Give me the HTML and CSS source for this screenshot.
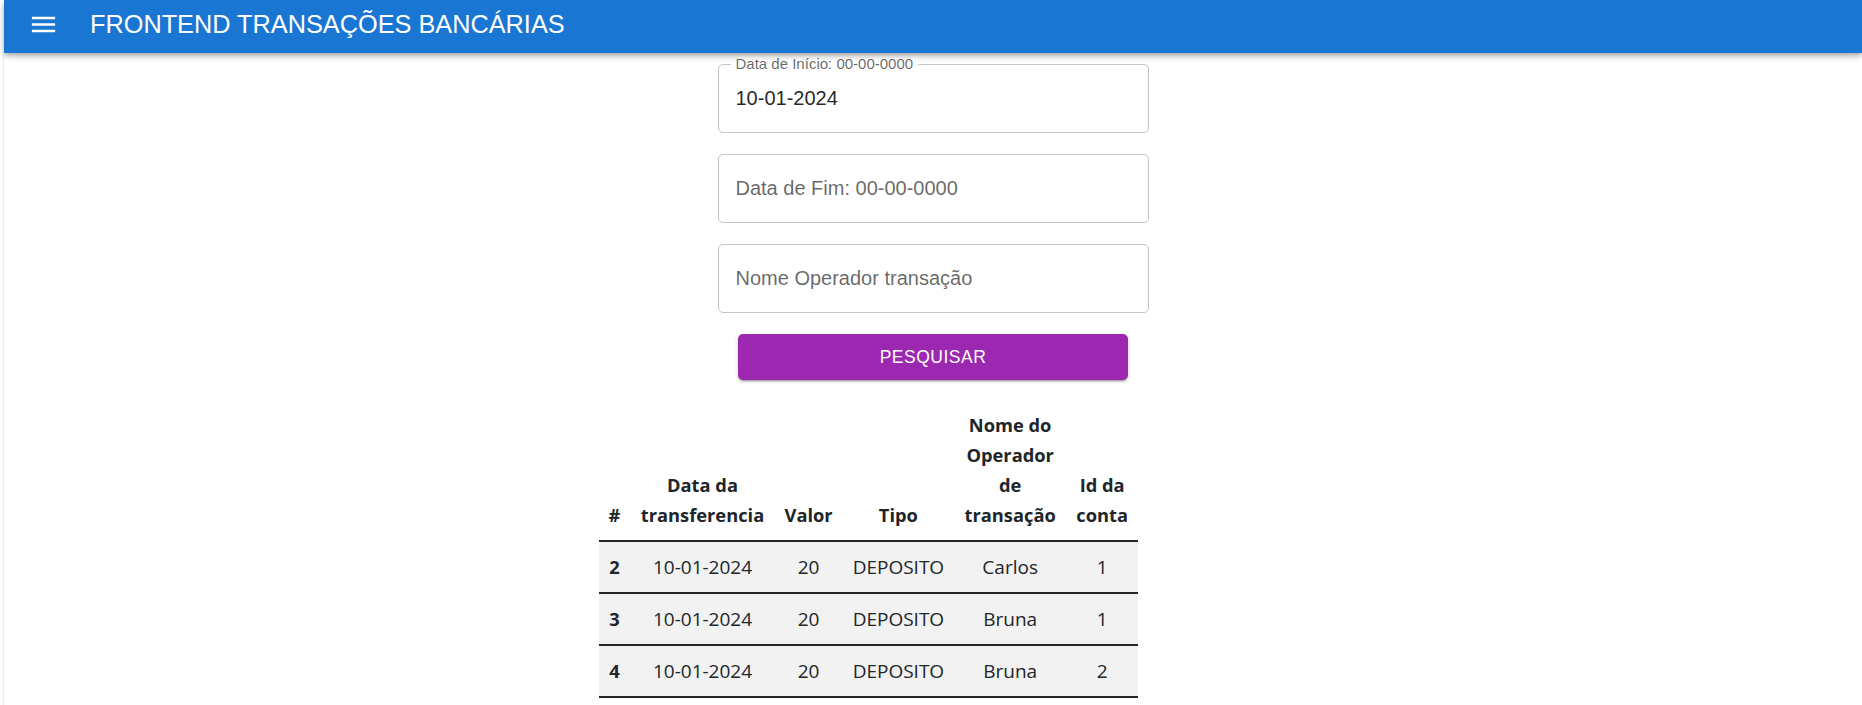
FILE: index.html
```html
<!DOCTYPE html>
<html lang="pt-BR">
<head>
<meta charset="utf-8">
<title>Frontend Transações Bancárias</title>
<link rel="stylesheet" href="styles.css">
</head>
<body>
<div class="app">
  <header class="appbar">
    <button class="menu-btn" aria-label="menu">
      <svg class="menu-icon" viewBox="0 0 24 24" width="31" height="31"><path fill="#fff" d="M3 18h18v-2H3v2zm0-5h18v-2H3v2zm0-7v2h18V6H3z"/></svg>
    </button>
    <h1 class="title">FRONTEND TRANSAÇÕES BANCÁRIAS</h1>
  </header>
  <main class="content">
    <form class="search-form">
      <div class="field">
        <span class="field-label">Data de Início: 00-00-0000</span>
        <span class="field-value">10-01-2024</span>
      </div>
      <div class="field">
        <span class="field-placeholder">Data de Fim: 00-00-0000</span>
      </div>
      <div class="field">
        <span class="field-placeholder">Nome Operador transação</span>
      </div>
      <button type="button" class="search-btn">Pesquisar</button>
    </form>
    <div class="table-wrap">
      <table class="tx-table">
        <thead>
          <tr>
            <th class="c-id">#</th>
            <th class="c-date">Data da transferencia</th>
            <th class="c-val">Valor</th>
            <th class="c-type">Tipo</th>
            <th class="c-name">Nome do Operador de transação</th>
            <th class="c-acc">Id da conta</th>
          </tr>
        </thead>
        <tbody>
          <tr><th>2</th><td>10-01-2024</td><td>20</td><td>DEPOSITO</td><td>Carlos</td><td>1</td></tr>
          <tr><th>3</th><td>10-01-2024</td><td>20</td><td>DEPOSITO</td><td>Bruna</td><td>1</td></tr>
          <tr><th>4</th><td>10-01-2024</td><td>20</td><td>DEPOSITO</td><td>Bruna</td><td>2</td></tr>
        </tbody>
      </table>
    </div>
  </main>
</div>
</body>
</html>
```
FILE: styles.css
```css
* { box-sizing: border-box; }
html, body { margin: 0; padding: 0; background: #fff; }
body { font-family: "Liberation Sans", Arial, sans-serif; }

.app { padding-left: 3px; min-height: 100vh; }

.appbar {
  margin-left: 1px;
  height: 53px;
  padding: 0 0 5px 24px;
  background: #1976d2;
  display: flex;
  align-items: center;
  box-shadow: 0 2px 4px -1px rgba(0,0,0,.2), 0 4px 5px 0 rgba(0,0,0,.14), 0 1px 10px 0 rgba(0,0,0,.12);
  position: relative;
  z-index: 2;
}
.menu-btn {
  border: 0; background: none; padding: 0; margin: 0 31px 0 0;
  width: 31px; height: 31px; display: flex; cursor: pointer;
}
.menu-icon { display: block; }
.title {
  margin: 0;
  font-family: "Liberation Sans", Arial, sans-serif;
  font-weight: 400;
  font-size: 25.3px;
  line-height: 30px;
  color: #fff;
}

.content {
  border-left: 1px solid #ececec;
  min-height: calc(100vh - 53px);
  display: flex;
  flex-direction: column;
  align-items: center;
  padding-top: 11px;
}

.search-form {
  width: 431px;
  display: flex;
  flex-direction: column;
  align-items: center;
  gap: 21px;
}
.field {
  position: relative;
  width: 431px;
  height: 69px;
  border: 1px solid #c4c4c4;
  border-radius: 5px;
  display: flex;
  align-items: center;
  padding-left: 17px;
}
.field-label {
  position: absolute;
  top: -9px;
  left: 12px;
  padding: 0 5px;
  background: #fff;
  font-size: 15px;
  line-height: 15px;
  color: rgba(0,0,0,.6);
}
.field-value { font-size: 20px; color: rgba(0,0,0,.87); }
.field-placeholder { font-size: 20px; color: rgba(0,0,0,.6); }

.search-btn {
  width: 390px;
  height: 46px;
  border: 0;
  border-radius: 5px;
  background: #9c27b0;
  color: #fff;
  font-family: "Liberation Sans", Arial, sans-serif;
  font-size: 17.5px;
  letter-spacing: .5px;
  text-transform: uppercase;
  box-shadow: 0 3px 1px -2px rgba(0,0,0,.2), 0 2px 2px 0 rgba(0,0,0,.14), 0 1px 5px 0 rgba(0,0,0,.12);
  cursor: pointer;
}

.table-wrap {
  width: 669px;
  margin-top: 20px;
}
.tx-table {
  border-collapse: collapse;
  font-family: "Open Sans", "Noto Sans", sans-serif;
  font-size: 19px;
  line-height: 30px;
  color: #212529;
}
.tx-table th, .tx-table td {
  padding: 10px;
  text-align: center;
}
.tx-table th { font-size: 18.3px; font-weight: 700; }
.tx-table thead th {
  vertical-align: bottom;
  background: #fff;
  border-bottom: 2px solid #212529;
}
.tx-table tbody tr { background: #f2f2f2; border-bottom: 2px solid #212529; }
.tx-table td { font-weight: 400; }

.c-id { width: 32px; }
.c-date { width: 144px; }
.c-val { width: 68px; }
.c-type { width: 110px; }
.c-name { width: 112px; }
.c-acc { width: 72px; }
```
